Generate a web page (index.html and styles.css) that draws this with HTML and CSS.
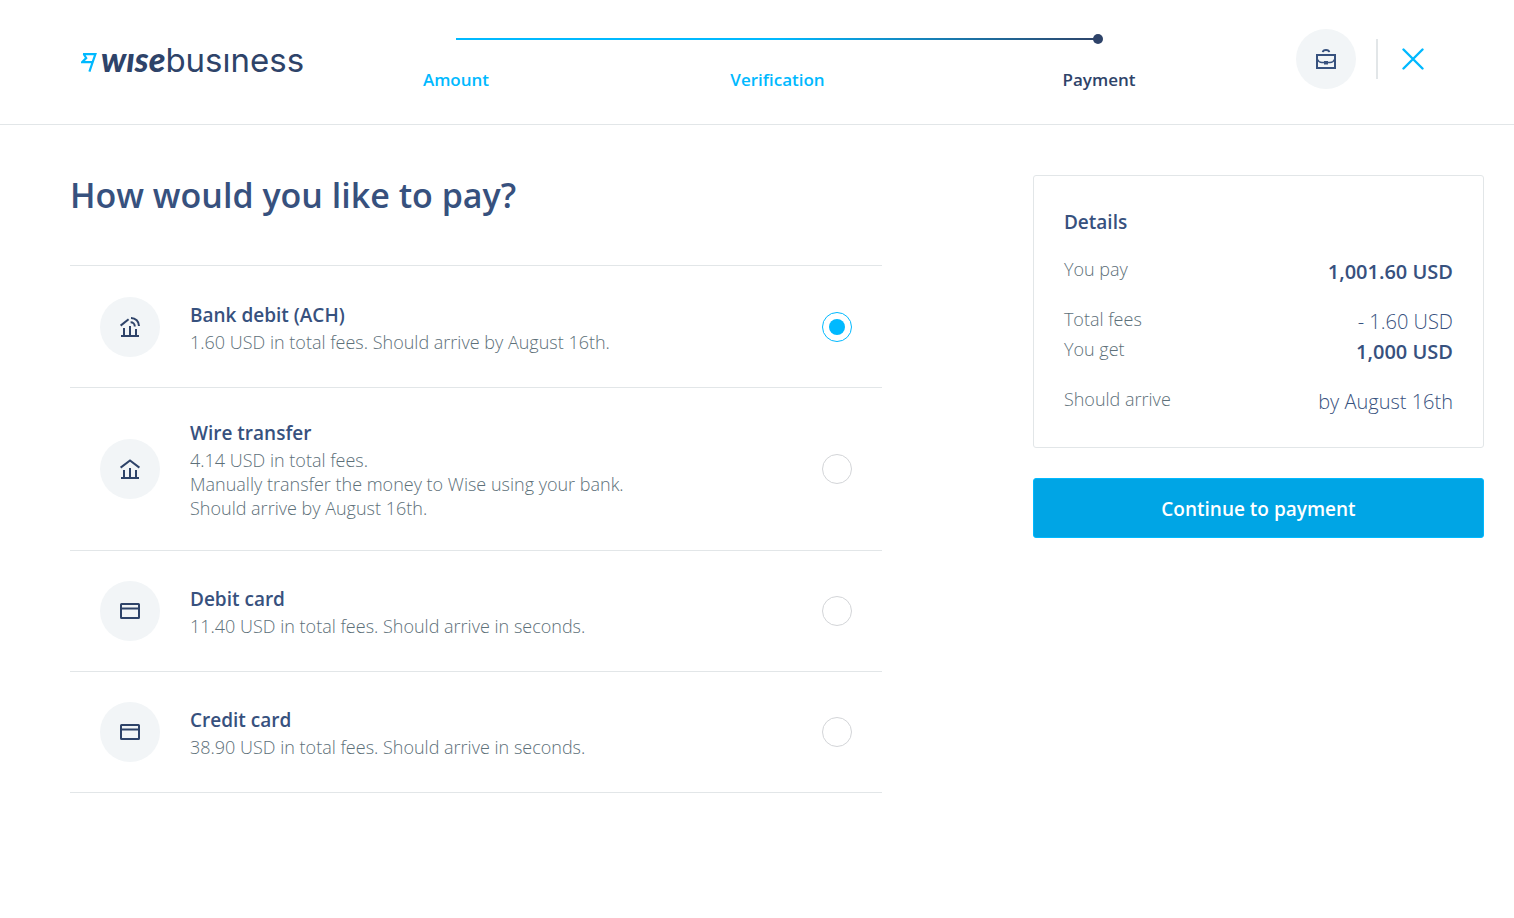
FILE: index.html
```html
<!DOCTYPE html>
<html lang="en">
  <head>
    <meta charset="UTF-8" />
    <meta name="viewport" content="width=device-width, initial-scale=1.0" />
    <title>Wise Business - Payment</title>
    <link rel="stylesheet" href="styles.css">
  </head>
  <body>
    <header class="header">
      <a href="#" class="logo" aria-label="Wise Business">
        <svg class="logo-flag" width="17" height="19" viewBox="0 0 17 19" aria-hidden="true">
          <path d="M2 1.200H14.400L8.400 18.600M2.600 1L5.200 5L1.200 9.200H11" fill="none" stroke="#00b9ff" stroke-width="2.200" />
        </svg>
        <span class="logo-wise">wıse</span><span class="logo-business">busıness</span>
      </a>

      <nav class="stepper" aria-label="Progress">
        <div class="stepper-line"></div>
        <ol class="steps">
          <li><a href="#">Amount</a></li>
          <li><a href="#">Verification</a></li>
          <li class="active" aria-current="step">Payment</li>
        </ol>
      </nav>

      <div class="actions">
        <button type="button" class="circle" aria-label="Business profile">
          <svg width="20" height="20" viewBox="0 0 20 20" fill="none" stroke="#37517e" stroke-width="2">
            <path d="M1 6H19V19H1Z" />
            <path d="M6.8 3.2C7 1.8 8 1 10 1S13 1.8 13.2 3.2" />
            <path d="M1.5 10.5C2.5 13 4 13.5 6 13.5H14C16 13.5 17.5 13 18.5 10.5" stroke-width="1.5" />
            <path d="M8 12H12V15.5H8Z" fill="#37517e" stroke="none" />
          </svg>
        </button>
        <span class="divider"></span>
        <button type="button" class="close" aria-label="Close">
          <svg width="22" height="22" viewBox="0 0 22 22" fill="none" stroke="#00b9ff" stroke-width="2.4" stroke-linecap="round">
            <path d="M1.5 1.5L20.5 20.5M20.5 1.5L1.5 20.5" />
          </svg>
        </button>
      </div>
    </header>

    <main class="content">
      <section>
        <h1>How would you like to pay?</h1>

        <form class="methods" id="payForm">
          <label class="method">
            <span class="circle">
              <svg width="20" height="20" viewBox="0 0 20 20" fill="none" stroke="#2e4369" stroke-width="2">
                <path d="M1 19H19M4 11V19M10 9V19M16 12V19" />
                <path d="M.6 8.6L8.6 2.2" />
                <path d="M10.6 5.2C13 5.2 14.8 7 14.8 9.4M11 1C15.6 1 19 4.4 19 9" />
              </svg>
            </span>
            <span class="method-text">
              <strong>Bank debit (ACH)</strong>
              <span>1.60 USD in total fees. Should arrive by August 16th.</span>
            </span>
            <input type="radio" name="method" value="ach" checked />
          </label>

          <label class="method">
            <span class="circle">
              <svg width="20" height="20" viewBox="0 0 20 20" fill="none" stroke="#2e4369" stroke-width="2">
                <path d="M1 19H19M4 11V19M10 9V19M16 11V19" />
                <path d="M.6 8.6L10 1.4L19.4 8.6" />
              </svg>
            </span>
            <span class="method-text">
              <strong>Wire transfer</strong>
              <span>4.14 USD in total fees.<br />Manually transfer the money to Wise using your bank.<br />Should arrive by August 16th.</span>
            </span>
            <input type="radio" name="method" value="wire" />
          </label>

          <label class="method">
            <span class="circle">
              <svg width="20" height="16" viewBox="0 0 20 16" fill="none" stroke="#2e4369" stroke-width="2">
                <rect x="1" y="1" width="18" height="14" rx=".5" />
                <path d="M1 5.5H19" />
              </svg>
            </span>
            <span class="method-text">
              <strong>Debit card</strong>
              <span>11.40 USD in total fees. Should arrive in seconds.</span>
            </span>
            <input type="radio" name="method" value="debit" />
          </label>

          <label class="method">
            <span class="circle">
              <svg width="20" height="16" viewBox="0 0 20 16" fill="none" stroke="#2e4369" stroke-width="2">
                <rect x="1" y="1" width="18" height="14" rx=".5" />
                <path d="M1 5.5H19" />
              </svg>
            </span>
            <span class="method-text">
              <strong>Credit card</strong>
              <span>38.90 USD in total fees. Should arrive in seconds.</span>
            </span>
            <input type="radio" name="method" value="credit" />
          </label>
        </form>
      </section>

      <aside>
        <div class="details">
          <h2>Details</h2>
          <dl>
            <div class="row gap"><dt>You pay</dt><dd class="bold">1,001.60 USD</dd></div>
            <div class="row"><dt>Total fees</dt><dd>- 1.60 USD</dd></div>
            <div class="row gap"><dt>You get</dt><dd class="bold">1,000 USD</dd></div>
            <div class="row"><dt>Should arrive</dt><dd>by August 16th</dd></div>
          </dl>
        </div>
        <button type="submit" form="payForm" class="continue">Continue to payment</button>
      </aside>
    </main>
  </body>
</html>
```

FILE: styles.css
```css
* {
  box-sizing: border-box;
}

body {
  margin: 0;
  font-family: "Open Sans", sans-serif;
  font-size: 18px;
  line-height: 24px;
  color: #37517e;
  background: #fff;
}

a {
  color: inherit;
  text-decoration: none;
}

button {
  font-family: inherit;
  border: none;
  padding: 0;
  cursor: pointer;
}

/* header */
.header {
  display: grid;
  grid-template-columns: 310px 1fr 260px;
  align-items: start;
  height: 125px;
  padding: 29px 90px 0 81px;
  border-bottom: 1px solid #e2e6e8;
}

.logo {
  display: flex;
  align-items: baseline;
  height: 60px;
  padding-top: 10px;
  line-height: 40px;
  color: #2e4369;
}

.logo-flag {
  margin-right: 3px;
}

.logo-wise {
  font-family: Lato, sans-serif;
  font-size: 34px;
  font-weight: 900;
  font-style: italic;
}

.logo-business {
  font-family: Inter, sans-serif;
  font-size: 33px;
}

.stepper-line {
  position: relative;
  height: 2px;
  margin: 9px 65px 0;
  background: linear-gradient(to right, #00b9ff 50%, #2e4369);
}

.stepper-line::after {
  content: "";
  position: absolute;
  right: -4px;
  top: -4px;
  width: 10px;
  height: 10px;
  border-radius: 50%;
  background: #2e4369;
}

.steps {
  display: grid;
  grid-template-columns: 130px 1fr 130px;
  margin: 28px 0 0;
  padding: 0;
  list-style: none;
  text-align: center;
  font-size: 17px;
  font-weight: 600;
  color: #00b9ff;
}

.steps .active {
  color: #2e4369;
}

.actions {
  display: flex;
  align-items: center;
  justify-content: flex-end;
}

.circle {
  display: flex;
  flex: none;
  align-items: center;
  justify-content: center;
  width: 60px;
  height: 60px;
  border-radius: 50%;
  background: #f2f5f7;
}

.divider {
  width: 2px;
  height: 40px;
  margin: 0 24px 0 20px;
  background: #e2e6e8;
}

.close {
  display: flex;
  background: none;
}

/* content */
.content {
  display: grid;
  grid-template-columns: 9fr 5fr;
  gap: 151px;
  padding: 50px 30px 50px 70px;
}

h1 {
  margin: 0 0 50px;
  font-size: 34px;
  font-weight: 600;
  line-height: 40px;
}

.methods {
  padding-top: 1px;
  border-top: 1px solid #e2e6e8;
}

.method {
  display: flex;
  align-items: center;
  gap: 30px;
  padding: 30px;
  border-bottom: 1px solid #e2e6e8;
  cursor: pointer;
}

.method-text {
  flex: 1;
  font-weight: 300;
  color: #5d7079;
}

.method-text strong {
  display: block;
  font-size: 19px;
  font-weight: 600;
  line-height: 30px;
  color: #37517e;
}

.method input {
  display: grid;
  place-items: center;
  flex: none;
  appearance: none;
  width: 30px;
  height: 30px;
  margin: 0;
  border: 1px solid #d3d5d8;
  border-radius: 50%;
}

.method input:checked {
  border-color: #00b9ff;
}

.method input:checked::before {
  content: "";
  width: 16px;
  height: 16px;
  border-radius: 50%;
  background: #00b9ff;
}

/* details */
.details {
  padding: 31px 30px 30px;
  border: 1px solid #e2e6e8;
  border-radius: 3px;
}

h2 {
  margin: 0 0 20px;
  font-size: 19px;
  font-weight: 600;
  line-height: 30px;
}

dl,
dd {
  margin: 0;
}

.row {
  display: flex;
  justify-content: space-between;
  font-weight: 300;
}

.row.gap {
  margin-bottom: 20px;
}

dt {
  color: #5d7079;
}

dd {
  font-size: 20px;
  line-height: 30px;
}

dd.bold {
  font-weight: 600;
}

.continue {
  width: 100%;
  height: 60px;
  margin-top: 30px;
  padding-top: 2px;
  border: 1px solid #00b9ff;
  border-radius: 3px;
  background: #00a5e5;
  color: #fff;
  font-size: 19px;
  font-weight: 600;
}
```
